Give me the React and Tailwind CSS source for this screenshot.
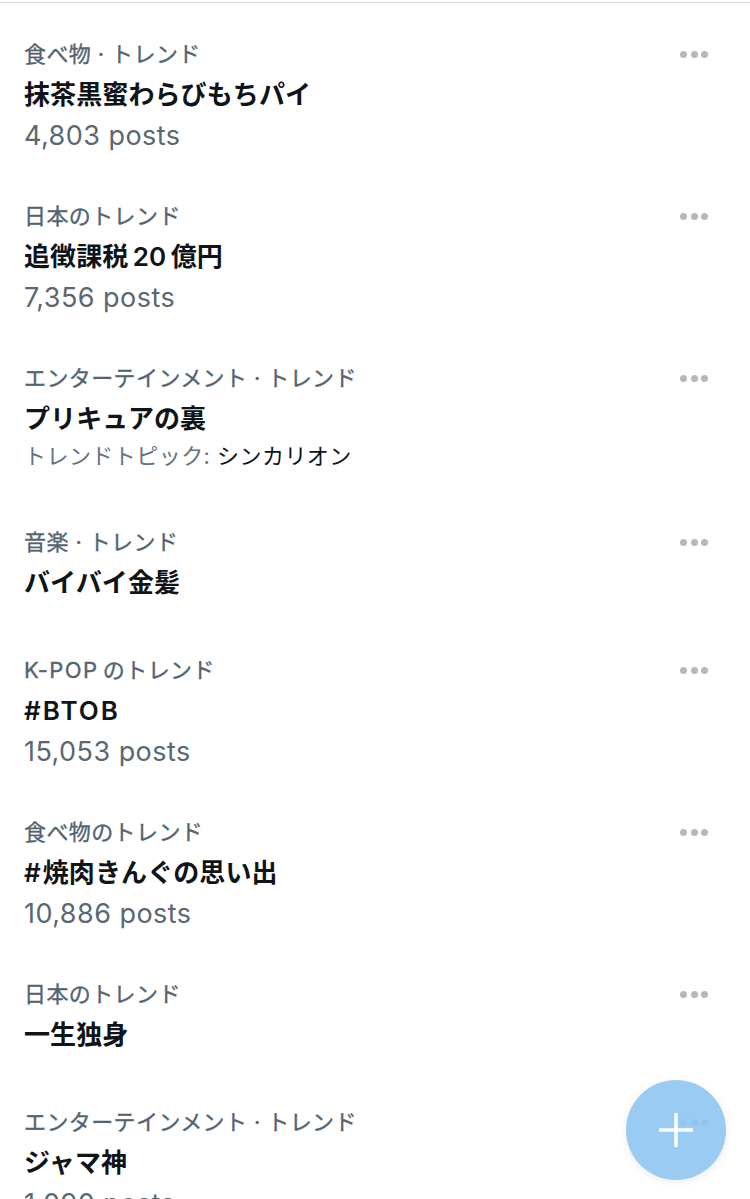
import React from 'react';

const trends = [
    { category: '食べ物 · トレンド', title: '抹茶黒蜜わらびもちパイ', posts: '4,803 posts' },
    { category: '日本のトレンド', title: '追徴課税\u200920\u2009億円', posts: '7,356 posts' },
    { category: 'エンターテインメント · トレンド', title: 'プリキュアの裏', topic: 'シンカリオン' },
    { category: '音楽 · トレンド', title: 'バイバイ金髪' },
    { category: <><span className="tracking-[1.4px]">K-POP</span>{'\u2009'}のトレンド</>, title: '#BTOB', titleWide: true, posts: '15,053 posts' },
    { category: '食べ物のトレンド', title: <><span className="tracking-[2px]">#</span>焼肉きんぐの思い出</>, posts: '10,886 posts' },
    { category: '日本のトレンド', title: '一生独身' },
    { category: 'エンターテインメント · トレンド', title: 'ジャマ神', posts: '1,090 posts' },
];

function TrendRow({ trend }) {
    return (
        <div className="relative px-[25px] pt-[27px]">
            <div className="-ml-px h-[24px] text-[22px] leading-[24px] tracking-[0.4px] [-webkit-text-stroke:0.35px] text-[#536471]">{trend.category}</div>
            <div className={`-ml-px mt-[13px] h-[31px] text-[26px] leading-[32px] font-semibold text-[#0f1419] ${trend.titleWide ? 'tracking-[2px]' : 'tracking-[0.1px]'}`}>{trend.title}</div>
            {trend.posts && (
                <div className="-ml-px mt-[10px] mb-[25px] h-[32px] text-[27px] leading-[32px] tracking-[0.45px] text-[#5b6771]">{trend.posts}</div>
            )}
            {trend.topic && (
                <div className="-ml-px mt-[10px] mb-[35px] h-[24px] text-[22px] leading-[24px] tracking-[0.45px] text-[#66727c]">
                    トレンドトピック: <span className="text-[#0f1419]">{trend.topic}</span>
                </div>
            )}
            {!trend.posts && !trend.topic && <div className="h-[33px]" />}
            {/* More menu */}
            <div className="absolute top-[36px] right-[42px] flex gap-[3.5px]">
                <span className="w-[7px] h-[7px] rounded-full bg-[#b3b9bf]" />
                <span className="w-[7px] h-[7px] rounded-full bg-[#b3b9bf]" />
                <span className="w-[7px] h-[7px] rounded-full bg-[#b3b9bf]" />
            </div>
        </div>
    );
}

export default function App() {
    return (
        <div className="relative h-[1199px] w-[750px] overflow-hidden bg-white font-['Inter','Noto_Sans_CJK_JP',sans-serif]">
            <div className="mt-[2px] h-px bg-[#d9dcdf]" />
            <div className="pt-[12px]">
                {trends.map((trend, i) => (
                    <TrendRow key={i} trend={trend} />
                ))}
            </div>
            {/* Compose button */}
            <button className="absolute top-[1080px] left-[626px] w-[100px] h-[100px] rounded-full bg-[#8ec5f2]/90 shadow-[0_2px_8px_rgba(0,0,0,0.08)] flex items-center justify-center">
                <svg width="36" height="36" viewBox="0 0 36 36" fill="none">
                    <path d="M18 1v34M1 18h34" stroke="#ffffff" strokeWidth="3.5" />
                </svg>
            </button>
        </div>
    );
}
